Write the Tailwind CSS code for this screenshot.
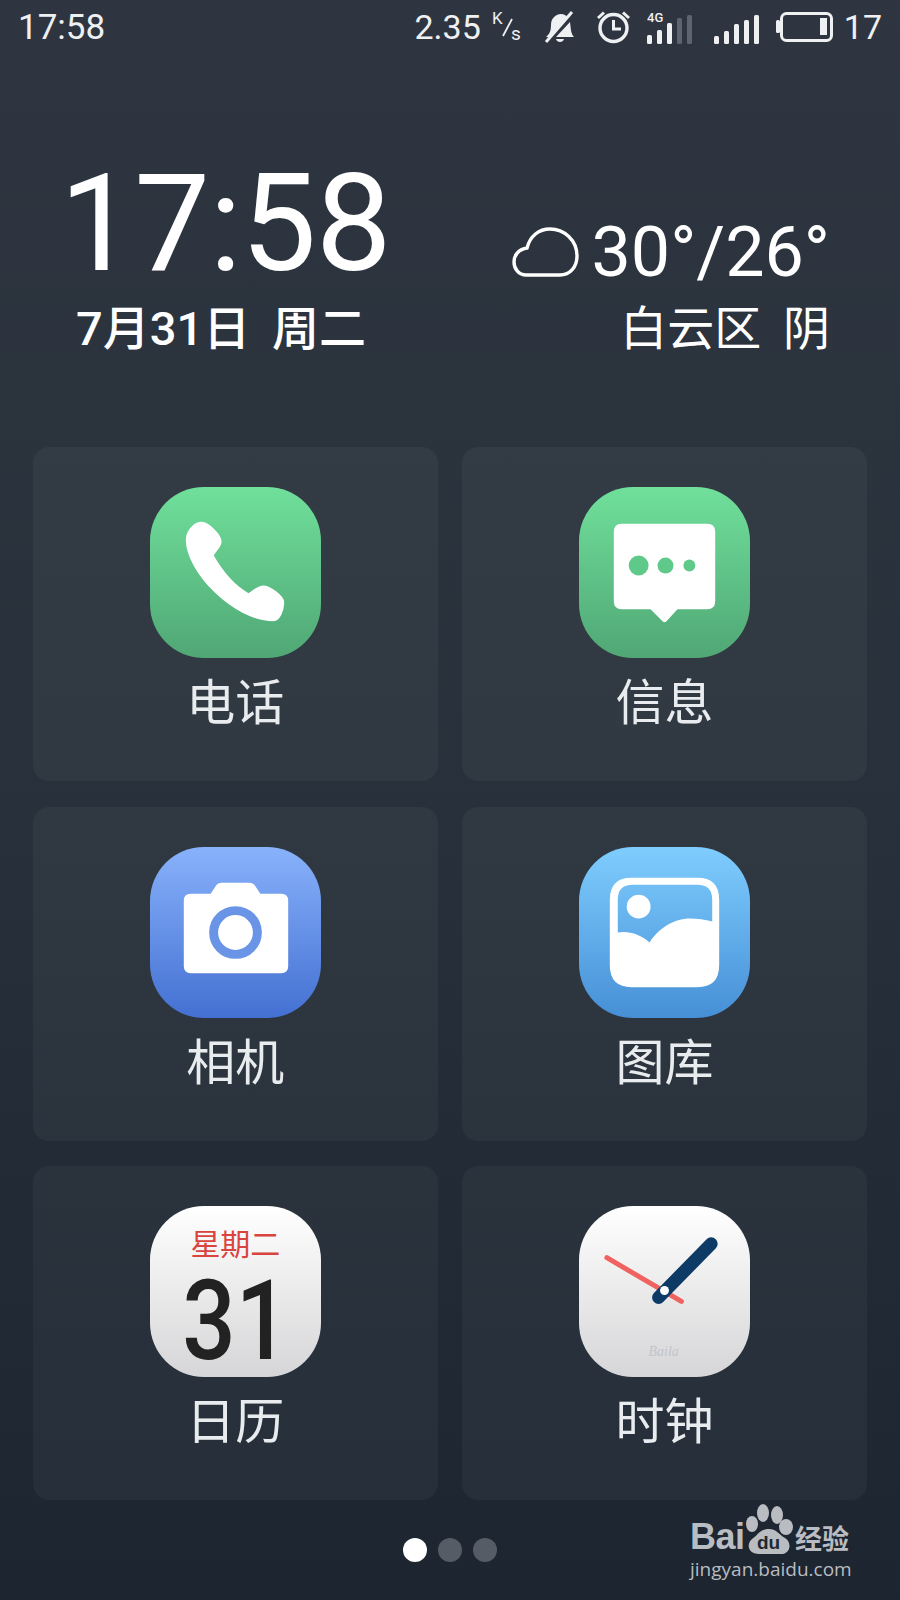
<!DOCTYPE html>
<html lang="zh-CN">
<head>
  <meta charset="UTF-8" />
  <title>Home</title>
  <script src="https://cdn.jsdelivr.net/npm/@tailwindcss/browser@4"></script>
</head>
<body class="bg-[#1b2530]">
  <div class="relative w-[900px] h-[1600px] overflow-hidden bg-linear-to-b from-[#2e3540] via-[#28313b] to-[#1c2530] font-['Roboto','Noto_Sans_CJK_SC',sans-serif] text-white">

    <!-- status bar -->
    <div class="flex items-center justify-between h-[54px] pl-[18px] pr-[18px] text-[34px] leading-none text-[#eef0f2]">
      <span class="text-[35px]">17:58</span>
      <div class="flex items-center">
        <span>2.35</span>
        <svg class="ml-[10px]" width="32" height="40" viewBox="0 0 32 40" fill="none">
          <text x="1" y="17" font-size="17" fill="#eef0f2" font-family="Roboto">K</text>
          <path d="M12 29 L21 12" stroke="#eef0f2" stroke-width="1.8"/>
          <text x="20" y="33" font-size="19" fill="#eef0f2" font-family="Roboto">s</text>
        </svg>
        <svg class="ml-[21px]" width="30" height="34" viewBox="0 0 30 34" fill="none">
          <path d="M2 27 C6 24 7 20 7 15 C7 8 12 4 17 4 C20 4 22 5 24 8 L7 27 Z" fill="#eef0f2"/>
          <path d="M26 12 C27 20 27 24 30 27 L12 27 Z" fill="#eef0f2"/>
          <path d="M12 29 C13 33 19 33 20 29 Z" fill="#eef0f2"/>
          <path d="M2 32 L28 2" stroke="#eef0f2" stroke-width="3"/>
        </svg>
        <svg class="ml-[22px]" width="35" height="34" viewBox="0 0 35 34" fill="none" stroke="#eef0f2">
          <circle cx="17.5" cy="18" r="13.5" stroke-width="3.4"/>
          <path d="M17.5 10 V19 H25" stroke-width="3"/>
          <path d="M2 8 L8 2.5 M33 8 L27 2.5" stroke-width="3"/>
        </svg>
        <svg class="ml-[16px]" width="45" height="36" viewBox="0 0 45 36" fill="#eef0f2">
          <text x="0" y="13" font-size="13" font-weight="500" font-family="Roboto">4G</text>
          <rect x="0" y="26" width="5" height="9" rx="1.5"/>
          <rect x="10" y="21" width="5" height="14" rx="1.5"/>
          <rect x="20" y="14" width="5" height="21" rx="1.5"/>
          <rect x="30" y="9" width="5" height="26" rx="1.5" fill="#5e656f"/>
          <rect x="40" y="6" width="5" height="29" rx="1.5" fill="#5e656f"/>
        </svg>
        <svg class="ml-[22px]" width="45" height="36" viewBox="0 0 45 36" fill="#eef0f2">
          <rect x="0" y="27" width="5" height="8" rx="1.5"/>
          <rect x="10" y="22" width="5" height="13" rx="1.5"/>
          <rect x="20" y="15" width="5" height="20" rx="1.5"/>
          <rect x="30" y="11" width="5" height="24" rx="1.5"/>
          <rect x="40" y="6" width="5" height="29" rx="1.5"/>
        </svg>
        <svg class="ml-[17px]" width="57" height="30" viewBox="0 0 57 30" fill="#eef0f2">
          <rect x="0" y="8" width="4" height="13" rx="1.5"/>
          <rect x="5.5" y="1.5" width="50" height="27" rx="5" fill="none" stroke="#eef0f2" stroke-width="3"/>
          <rect x="44" y="6" width="7" height="17"/>
        </svg>
        <span class="ml-[11px]">17</span>
      </div>
    </div>

    <!-- clock and weather -->
    <div class="flex justify-between h-[393px] pl-[60px] pr-[70px]">
      <div class="flex flex-col items-center pt-[95px] w-[330px]">
        <span class="text-[135px] leading-[150px] font-normal tracking-[-1px] whitespace-nowrap">17:58</span>
        <span class="ml-[-8px] text-[47px] leading-[60px] font-medium whitespace-pre [word-spacing:10px]">7月31日 周二</span>
      </div>
      <div class="flex flex-col items-end pt-[158px]">
        <div class="flex items-center">
          <svg width="68" height="52" viewBox="0 0 68 52" fill="none" stroke="#fff" stroke-width="3.4">
            <path d="M14 49 C7 49 2 43 2 36 C2 29 7 23 15 22 C18 10 27 3 38 3 C52 3 65 14 65 30 C65 41 58 49 48 49 Z"/>
          </svg>
          <span class="ml-[11px] text-[70px] leading-[80px] font-normal whitespace-nowrap">30°/26°</span>
        </div>
        <span class="mt-[7px] text-[47px] leading-[60px] font-normal whitespace-pre [word-spacing:10px]">白云区 阴</span>
      </div>
    </div>

    <!-- app grid -->
    <div class="grid grid-cols-2 gap-x-[24.5px] gap-y-[25.5px] mx-[33px]">

      <div class="flex flex-col items-center h-[334px] pt-[40px] rounded-[16px] bg-white/[0.04]">
        <div class="w-[171px] h-[171px] rounded-[54px] bg-linear-to-b from-[#70e09b] to-[#50a775]">
          <svg width="171" height="171" viewBox="0 0 172 172" fill="#fff" stroke="#fff" stroke-width="2" stroke-linejoin="round">
            <path d="M37 53 C37 44 45 36 52 36 C58 36 71 48 71 55 C71 60 65 64 63 69 C72 85 85 100 99 108 C103 106 108 100 114 100 C120 100 134 110 134 116 C134 124 130 134 124 134 C85 134 37 85 37 53 Z"/>
          </svg>
        </div>
        <span class="mt-[15px] text-[49px] leading-[62px] text-[#e9ecee]">电话</span>
      </div>

      <div class="flex flex-col items-center h-[334px] pt-[40px] rounded-[16px] bg-white/[0.04]">
        <div class="w-[171px] h-[171px] rounded-[54px] bg-linear-to-b from-[#70e09b] to-[#50a775]">
          <svg width="171" height="171" viewBox="0 0 172 172">
            <path fill="#fff" d="M43 37 H129 Q137 37 137 45 V115 Q137 123 129 123 H99 L88 135 Q86 137 84 135 L72 123 H43 Q35 123 35 115 V45 Q35 37 43 37 Z"/>
            <circle cx="60" cy="79" r="10" fill="#5fc98a"/>
            <circle cx="87" cy="79" r="8" fill="#5fc98a"/>
            <circle cx="111" cy="79" r="6" fill="#5fc98a"/>
          </svg>
        </div>
        <span class="mt-[15px] text-[49px] leading-[62px] text-[#e9ecee]">信息</span>
      </div>

      <div class="flex flex-col items-center h-[334px] pt-[40px] rounded-[16px] bg-white/[0.04]">
        <div class="w-[171px] h-[171px] rounded-[54px] bg-linear-to-b from-[#89b2fb] to-[#4470d2]">
          <svg width="171" height="171" viewBox="0 0 172 172">
            <path fill="#fff" d="M41 47 H61 L67 38 Q69 36 72 36 H100 Q103 36 105 38 L111 47 H132 Q139 47 139 54 V120 Q139 127 132 127 H41 Q34 127 34 120 V54 Q34 47 41 47 Z"/>
            <circle cx="86" cy="86" r="22" fill="none" stroke="#6a94e6" stroke-width="9"/>
          </svg>
        </div>
        <span class="mt-[15px] text-[49px] leading-[62px] text-[#e9ecee]">相机</span>
      </div>

      <div class="flex flex-col items-center h-[334px] pt-[40px] rounded-[16px] bg-white/[0.04]">
        <div class="w-[171px] h-[171px] rounded-[54px] bg-linear-to-b from-[#7fcdfe] to-[#468fd6]">
          <svg width="171" height="171" viewBox="0 0 172 172" fill="#fff">
            <path fill-rule="evenodd" d="M53 31 H119 Q141 31 141 53 V119 Q141 141 119 141 H53 Q31 141 31 119 V53 Q31 31 53 31 Z M54 38 Q39 38 39 53 V86 C50 84 62 88 71 96 C80 82 95 72 112 72 C119 72 127 73 134 75 V53 Q134 38 119 38 Z"/>
            <circle cx="60" cy="60" r="12"/>
          </svg>
        </div>
        <span class="mt-[15px] text-[49px] leading-[62px] text-[#e9ecee]">图库</span>
      </div>

      <div class="flex flex-col items-center h-[334px] pt-[40px] rounded-[16px] bg-white/[0.04]">
        <div class="flex flex-col items-center w-[171px] h-[171px] rounded-[54px] bg-linear-to-b from-[#ffffff] to-[#d6d6d8]">
          <span class="mt-[21px] text-[30px] leading-[36px] text-[#d9443f]">星期二</span>
          <span class="mt-[8px] text-[112px] leading-[100px] font-medium text-[#222222] scale-x-[.84]">31</span>
        </div>
        <span class="mt-[15px] text-[49px] leading-[62px] text-[#e9ecee]">日历</span>
      </div>

      <div class="flex flex-col items-center h-[334px] pt-[40px] rounded-[16px] bg-white/[0.04]">
        <div class="w-[171px] h-[171px] rounded-[54px] bg-linear-to-b from-[#ffffff] to-[#d6d6d8]">
          <svg width="171" height="171" viewBox="0 0 172 172" fill="none" stroke-linecap="round">
            <path d="M28 52 L103 96" stroke="#f0625f" stroke-width="5"/>
            <path d="M80 92 L133 38" stroke="#0e3a66" stroke-width="13"/>
            <circle cx="86" cy="85" r="4.5" fill="#fff"/>
            <text x="70" y="151" font-size="14" font-style="italic" fill="#c3c4c9" font-family="Liberation Serif">Baila</text>
          </svg>
        </div>
        <span class="mt-[15px] text-[49px] leading-[62px] text-[#e9ecee]">时钟</span>
      </div>
    </div>

    <!-- page dots -->
    <div class="flex justify-center gap-[11px] mt-[38px] ml-[-1px]">
      <span class="w-[24px] h-[24px] rounded-full bg-white"></span>
      <span class="w-[24px] h-[24px] rounded-full bg-[#555c65]"></span>
      <span class="w-[24px] h-[24px] rounded-full bg-[#555c65]"></span>
    </div>

    <!-- watermark -->
    <div class="absolute left-[690px] top-[1503px] w-[165px] text-[#b9bcc0]">
      <div class="flex items-end h-[52px]">
        <span class="text-[36px] leading-[36px] font-bold font-['Liberation_Sans'] tracking-[-0.5px] w-[55px]">Bai</span>
        <svg width="49" height="52" viewBox="0 0 49 52" fill="#b9bcc0">
          <ellipse cx="18" cy="10" rx="6" ry="9"/>
          <ellipse cx="32" cy="12" rx="6" ry="9"/>
          <ellipse cx="7" cy="21" rx="6" ry="8"/>
          <ellipse cx="41" cy="24" rx="7" ry="8"/>
          <path d="M24 26 C32 26 34 32 40 35 C47 39 46 51 36 51 H14 C3 51 1 41 7 36 C13 32 15 26 24 26 Z"/>
          <text x="12" y="46" font-size="19" font-weight="700" fill="#1f2833" font-family="Liberation Sans">du</text>
        </svg>
        <span class="ml-[1px] text-[27px] leading-[30px] font-bold whitespace-nowrap">经验</span>
      </div>
      <div class="mt-[2px] text-[19px] leading-[24px] font-['Open_Sans'] font-normal whitespace-nowrap">jingyan.baidu.com</div>
    </div>
  </div>
</body>
</html>
